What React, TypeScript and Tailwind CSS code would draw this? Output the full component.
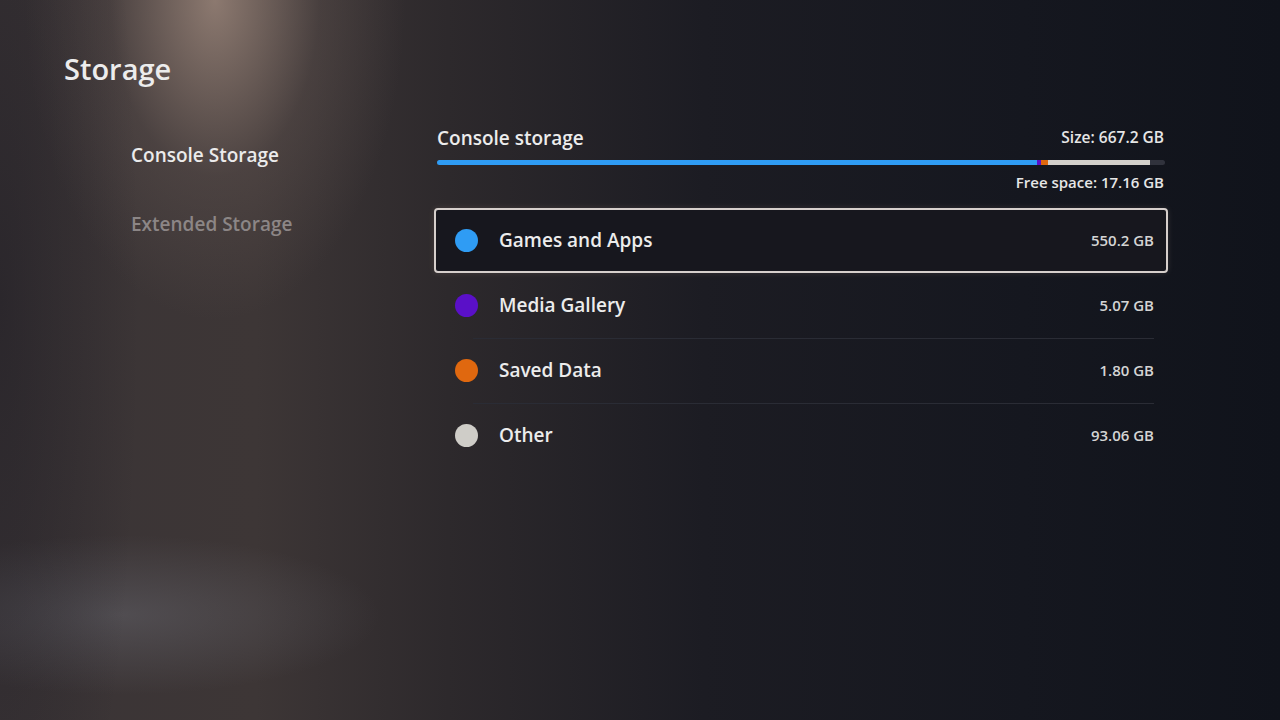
import React from "react";

const items = [
  { label: "Games and Apps", value: "550.2 GB", color: "bg-[#2f9cf4]" },
  { label: "Media Gallery", value: "5.07 GB", color: "bg-[#5a10c8]" },
  { label: "Saved Data", value: "1.80 GB", color: "bg-[#e0680f]" },
  { label: "Other", value: "93.06 GB", color: "bg-[#cfcdc8]" },
];

export default function App() {
  return (
    <div className="relative w-[1280px] h-[720px] overflow-hidden bg-[#161821] font-['Open_Sans',sans-serif] text-[#e8e8e8]">
      {/* background lighting */}
      <div className="absolute inset-0 bg-[linear-gradient(90deg,#3a3436_0%,#3d3636_20%,#2d292c_35%,#1c1c23_55%,#15171f_80%,#10131b_100%)]" />
      <div className="absolute inset-0 bg-[radial-gradient(ellipse_190px_320px_at_215px_0px,rgba(160,138,126,0.8),rgba(110,95,90,0.3)_55%,transparent_100%)]" />
      <div className="absolute inset-0 bg-[radial-gradient(ellipse_260px_80px_at_120px_615px,rgba(120,122,132,0.35),transparent_100%)]" />
      <div className="absolute inset-0 bg-[radial-gradient(ellipse_140px_720px_at_0px_300px,rgba(15,15,25,0.35),transparent_100%)]" />

      <div className="relative flex flex-col pl-16 pt-[50px]">
        <h1 className="text-[29px] font-semibold leading-[38px] text-[#ececec]">Storage</h1>

        <div className="flex mt-[35px]">
          {/* left menu */}
          <div className="w-[370px] flex flex-col pl-[67px] pt-[20px] gap-[45px]">
            <div className="text-[19px] font-semibold leading-6 text-[#ebebeb]">Console Storage</div>
            <div className="text-[19px] font-semibold leading-6 text-[#8c8686]">Extended Storage</div>
          </div>

          {/* right content */}
          <div className="w-[734px] flex flex-col pt-[3px]">
            <div className="flex items-center justify-between pl-[3px] pr-[4px] h-6">
              <span className="text-[19px] font-semibold text-[#ececec]">Console storage</span>
              <span className="text-[15.5px] font-semibold text-[#e6e6e6]">Size: 667.2 GB</span>
            </div>
            <div className="mt-[10px] mx-[3px] h-[5px] rounded-full overflow-hidden flex bg-[#30323c]">
              <div className="w-[600px] bg-[#2f9cf4]" />
              <div className="w-[4px] bg-[#5a10c8]" />
              <div className="w-[7px] bg-[#e0680f]" />
              <div className="w-[102px] bg-[#d3d0cb]" />
            </div>
            <div className="mt-[7px] pr-[4px] text-right text-[15px] font-semibold text-[#e6e6e6] leading-5">
              Free space: 17.16 GB
            </div>

            <div className="mt-[16px] flex flex-col">
              {items.map((it, i) => (
                <div key={it.label} className="relative">
                  {i >= 2 && (
                    <div className="absolute left-[39px] right-[14px] top-0 h-px bg-[#2a2c35]" />
                  )}
                  <div
                    className={
                      i === 0
                        ? "flex items-center h-[65px] pl-[19px] pr-[12px] rounded-[4px] border-2 border-[#d6cfcc] bg-[#17171e] shadow-[0_0_6px_rgba(255,220,200,0.12)]"
                        : "flex items-center h-[65px] pl-[21px] pr-[14px]"
                    }
                  >
                    <span className={`w-[23px] h-[23px] rounded-full ${it.color}`} />
                    <span className="ml-[21px] text-[19px] font-semibold text-[#ececec]">{it.label}</span>
                    <span className="ml-auto text-[15px] font-semibold text-[#d4d4d4]">{it.value}</span>
                  </div>
                </div>
              ))}
            </div>
          </div>
        </div>
      </div>
    </div>
  );
}
